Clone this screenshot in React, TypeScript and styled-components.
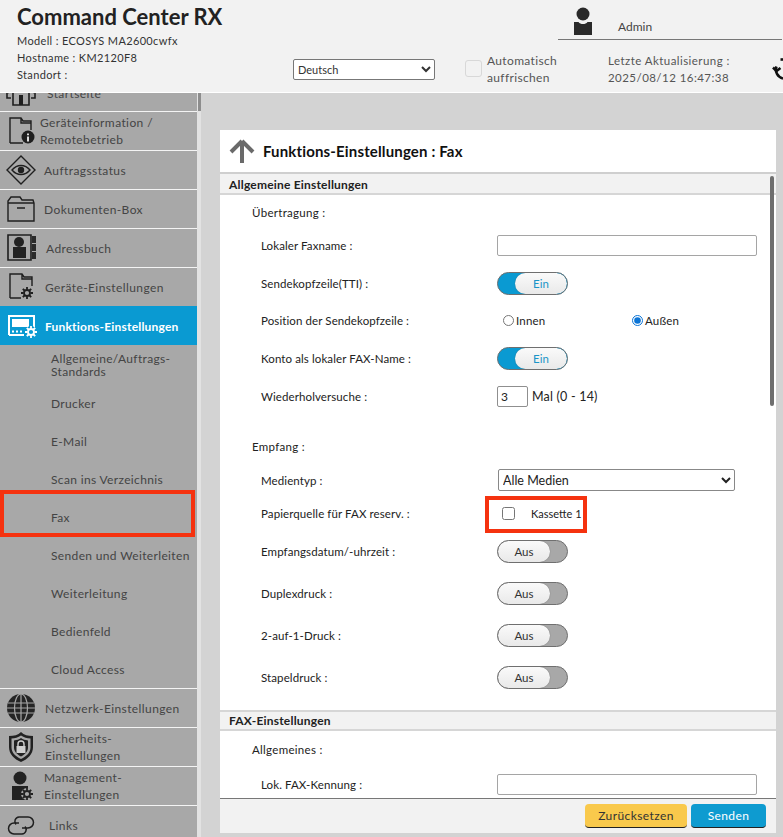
import React from 'react';
import styled, { createGlobalStyle } from 'styled-components';

const GlobalStyle = createGlobalStyle`
  html, body {
    margin: 0;
    padding: 0;
    height: 100%;
    overflow: hidden;
    background: #d3d3d3;
  }
  body, select, input, button {
    font-family: Lato, "Open Sans", sans-serif;
  }
`;

const Page = styled.div`
  width: 783px;
  height: 837px;
  display: flex;
  flex-direction: column;
  overflow: hidden;
`;

/* header */
const Header = styled.header`
  height: 93px;
  flex: none;
  display: grid;
  grid-template-columns: 293px 1fr;
  background: #f2f2f2;
  border-bottom: 1px solid #fff;
  box-sizing: border-box;
  overflow: hidden;
`;

const Brand = styled.div`
  padding: 3px 0 0 17px;
`;

const Title = styled.div`
  font-size: 22px;
  line-height: 28px;
  font-weight: 700;
  color: #222;
  white-space: nowrap;
  margin-bottom: 1px;
`;

const Info = styled.div`
  font-size: 11px;
  line-height: 17px;
  color: #333;
  white-space: nowrap;
  letter-spacing: 0.35px;
`;

const HeaderRight = styled.div`
  display: flex;
  flex-direction: column;
`;

const UserRow = styled.div`
  height: 40px;
  flex: none;
  margin-left: 265px;
  width: 224px;
  box-sizing: border-box;
  border-bottom: 1px solid #777;
  display: flex;
  align-items: flex-end;
  padding: 0 0 0 15px;
`;

const UserName = styled.span`
  font-size: 12px;
  color: #444;
  margin: 0 0 5px 25px;
`;

const Controls = styled.div`
  display: flex;
  height: 52px;
  padding-top: 12px;
  box-sizing: border-box;
  font-size: 12px;
  line-height: 17px;
  color: #555;
`;

const LangSelect = styled.select`
  width: 142px;
  height: 21px;
  font-size: 11px;
  color: #333;
  background: #fff;
  border: 1px solid #777;
  border-radius: 2px;
  margin-top: 7px;
  padding-left: 0;
`;

const AutoBox = styled.span`
  width: 17px;
  height: 17px;
  flex: none;
  margin: 8px 5px 0 30px;
  border: 1px solid #d8d8d8;
  border-radius: 3px;
  box-sizing: border-box;
`;

const AutoText = styled.div`
  width: 121px;
  flex: none;
  letter-spacing: 0.35px;
`;

const UpdateText = styled.div`
  width: 164px;
  flex: none;
  font-size: 11.5px;
  letter-spacing: 0.45px;
`;

/* body */
const Body = styled.div`
  flex: 1;
  min-height: 0;
  display: flex;
`;

const Sidebar = styled.nav`
  width: 197px;
  flex: none;
  background: #a8a8a8;
  overflow: hidden;
`;

const SideScroll = styled.div`
  width: 4px;
  flex: none;
  background: #e2e2e2;
`;

const SideThumb = styled.div`
  width: 3px;
  height: 18px;
  margin-left: 1px;
  background: #8d8d8d;
`;

const NavItem = styled.div<{ $active?: boolean; $cut?: boolean }>`
  height: 39px;
  box-sizing: border-box;
  border-top: 1px solid ${(p) => (p.$active ? '#0a9ad2' : '#f4f4f4')};
  display: flex;
  align-items: center;
  padding-left: 6px;
  padding-top: ${(p) => (p.$cut ? '3px' : '0')};
  margin-top: ${(p) => (p.$cut ? '-21px' : '0')};
  background: ${(p) => (p.$active ? '#0a9ad2' : 'transparent')};
  color: ${(p) => (p.$active ? '#fff' : '#444')};
`;

const NavIcon = styled.svg`
  width: 30px;
  height: 30px;
  flex: none;
  overflow: visible;
`;

const NavLabel = styled.span<{ $gap: number; $active?: boolean }>`
  margin-left: ${(p) => p.$gap}px;
  font-size: 12px;
  line-height: 17px;
  letter-spacing: ${(p) => (p.$active ? '0.2px' : '0.4px')};
  font-weight: ${(p) => (p.$active ? 700 : 400)};
`;

const SubItem = styled.div`
  height: 38px;
  box-sizing: border-box;
  position: relative;
  display: flex;
  align-items: center;
  padding: 0 0 0 51px;
  font-size: 12px;
  line-height: 13px;
  letter-spacing: 0.35px;
  color: #444;
`;

const SubGroup = styled.div`
  padding-top: 1px;
`;

const Mark = styled.div`
  position: absolute;
  border: 4px solid #f5320f;
  box-sizing: border-box;
  pointer-events: none;
`;

const FaxMark = styled(Mark)`
  left: 0;
  top: -8px;
  width: 195px;
  height: 47px;
`;

const PaperMark = styled(Mark)`
  left: -12px;
  top: -11px;
  width: 102px;
  height: 37px;
`;

const Main = styled.main`
  flex: 1;
  min-width: 0;
  padding: 37px 7px 4px 19px;
  display: flex;
`;

const Card = styled.div`
  flex: 1;
  min-width: 0;
  background: #fff;
  display: flex;
  flex-direction: column;
`;

const CardTitle = styled.div`
  height: 44px;
  flex: none;
  box-sizing: border-box;
  border-bottom: 2px solid #cfcfcf;
  display: flex;
  align-items: center;
  padding-left: 8px;
  font-size: 15px;
  font-weight: 700;
  color: #111;
  letter-spacing: 0.15px;
`;

const ArrowIcon = styled.svg`
  width: 28px;
  height: 26px;
  margin-right: 7px;
`;

const FormScroll = styled.div`
  flex: 1;
  min-height: 0;
  overflow: hidden;
  position: relative;
`;

const Thumb = styled.div`
  position: absolute;
  right: 2px;
  top: 2px;
  width: 4px;
  height: 230px;
  border-radius: 2px;
  background: #6e6e6e;
`;

const SectionBar = styled.div<{ $gapTop?: number }>`
  height: 21px;
  box-sizing: border-box;
  display: flex;
  align-items: center;
  background: #f2f2f2;
  border-bottom: 2px solid #d6d6d6;
  border-top: 2px solid ${(p) => (p.$gapTop ? '#d6d6d6' : '#f2f2f2')};
  margin-top: ${(p) => p.$gapTop ?? 0}px;
  padding-left: 9px;
  font-size: 12px;
  font-weight: 700;
  color: #222;
  letter-spacing: 0.2px;
`;

const GroupHead = styled.div<{ $gapTop?: number }>`
  height: 31px;
  box-sizing: border-box;
  padding: 10px 0 0 32px;
  margin-top: ${(p) => p.$gapTop ?? 0}px;
  font-size: 11.5px;
  line-height: 16px;
  color: #222;
  letter-spacing: 0.3px;
`;

const Row = styled.div<{ $h?: number; $after?: number }>`
  height: ${(p) => p.$h ?? 38}px;
  margin-bottom: ${(p) => p.$after ?? 0}px;
  display: flex;
  align-items: center;
  padding-left: 41px;
`;

const Label = styled.div`
  width: 236px;
  flex: none;
  font-size: 11.5px;
  color: #222;
  letter-spacing: 0.1px;
  white-space: nowrap;
`;

const Control = styled.div`
  position: relative;
  display: flex;
  align-items: center;
  font-size: 11.5px;
  color: #222;
`;

const TextInput = styled.input`
  width: 260px;
  height: 21px;
  box-sizing: border-box;
  border: 1px solid #a5a5a5;
  border-radius: 2px;
  outline: none;
  background: #fff;
`;

const NumberInput = styled.input`
  width: 31px;
  height: 21px;
  box-sizing: border-box;
  border: 1px solid #8f8f8f;
  border-radius: 2px;
  padding: 0 0 0 3px;
  font-size: 12px;
  color: #222;
  margin-right: 4px;
`;

const Unit = styled.span`
  font-size: 12.5px;
  letter-spacing: 0.2px;
`;

const MediaSelect = styled.select`
  width: 237px;
  height: 22px;
  margin-left: 1px;
  font-size: 12.5px;
  color: #222;
  background: #fff;
  border: 1px solid #888;
  border-radius: 2px;
`;

const Toggle = styled.div<{ $on: boolean }>`
  width: 71px;
  height: 23px;
  box-sizing: border-box;
  border: 1px solid #6f6f6f;
  border-radius: 12px;
  overflow: hidden;
  display: flex;
  flex-direction: ${(p) => (p.$on ? 'row' : 'row-reverse')};
  background: ${(p) => (p.$on ? '#0a9ad2' : '#a8a8a8')};
`;

const Knob = styled.div<{ $on: boolean }>`
  margin-${(p) => (p.$on ? 'left' : 'right')}: 17px;
  flex: 1;
  border-radius: 11px;
  background: linear-gradient(#fafafa, #e9e9e9);
  box-shadow: 0 0 1px #555;
  text-align: center;
  font-size: 11.5px;
  line-height: 22px;
  color: ${(p) => (p.$on ? '#1a95c8' : '#333')};
`;

const RadioLabel = styled.label`
  width: 129px;
  display: flex;
  align-items: center;
  padding-left: 6px;
  box-sizing: border-box;
  letter-spacing: 0.2px;
  &:last-child {
    width: 120px;
  }
`;

const Radio = styled.input`
  width: 11px;
  height: 11px;
  margin: 0 2px 0 0;
  accent-color: #0b74d6;
`;

const CheckBox = styled.input`
  width: 13px;
  height: 13px;
  margin: 0 16px 0 5px;
`;

const CheckText = styled.span`
  font-size: 11px;
`;

const Footer = styled.div`
  height: 35px;
  flex: none;
  box-sizing: border-box;
  background: #f2f2f2;
  border-top: 1px solid #777;
  display: flex;
  justify-content: flex-end;
  align-items: flex-start;
  gap: 4px;
  padding: 5px 10px 0 0;
`;

const Action = styled.button<{ $primary?: boolean }>`
  height: 24px;
  width: ${(p) => (p.$primary ? 75 : 102)}px;
  border: 0;
  border-bottom: 1px solid #222;
  border-radius: 4px;
  background: ${(p) => (p.$primary ? '#0e9bd0' : '#f9c94c')};
  color: ${(p) => (p.$primary ? '#fff' : '#333')};
  font-size: 12px;
  letter-spacing: 0.4px;
  padding: 0;
`;

const UserIcon = () => (
  <svg width="20" height="28" viewBox="0 0 20 28" style={{ marginBottom: 4 }}>
    <circle cx="10" cy="7" r="6.5" fill="#2a2a2a" />
    <path d="M1 15h4.5c1 1.500 2.600 2 4.500 2s3.500-.5 4.500-2H19v13H1z" fill="#2a2a2a" />
  </svg>
);

const RefreshIcon = () => (
  <svg
    width="24"
    height="24"
    viewBox="0 0 24 24"
    fill="none"
    stroke="#111"
    strokeWidth="2.6"
    style={{ marginTop: 5, flex: 'none' }}
  >
    <path d="M11 21.5A9 9 0 0 1 4.500 9.500" />
    <path d="M1 10.500l3.500 3.500 4-3" />
    <path d="M8.500 2.500h3" />
  </svg>
);

const S = { fill: 'none', stroke: '#1f1f1f', strokeWidth: 1.4 };

const HomeGlyph = () => (
  <NavIcon viewBox="0 0 30 30">
    <g {...S} strokeWidth={1.6}>
      <path d="M2 14L15 2l13 12" />
      <path d="M1 13v6h4M29 13v6h-4" />
      <path d="M7 14v12h16V14" />
    </g>
    <path d="M13 16h4v10h-4z" fill="#1f1f1f" />
  </NavIcon>
);

const InfoGlyph = () => (
  <NavIcon viewBox="0 0 30 30">
    <path {...S} d="M4 27V2h11l2 3h8v9M4 27h13M15 2v5h10" />
    <circle cx="22" cy="21" r="6.5" fill="#1f1f1f" />
    <path d="M21 17.500h2v1.800h-2zM21 20.500h2v5h-2z" fill="#ddd" />
  </NavIcon>
);

const EyeGlyph = () => (
  <NavIcon viewBox="0 0 30 30">
    <path {...S} d="M15 1l14 14-14 14L1 15z" />
    <path {...S} d="M6 15c5-6 13-6 18 0-5 6-13 6-18 0z" />
    <circle cx="15" cy="15" r="3.2" fill="#1f1f1f" />
  </NavIcon>
);

const BoxGlyph = () => (
  <NavIcon viewBox="0 0 30 30">
    <path {...S} d="M2 27V7l3-4h9l2 3h11l1 3v18zM2 9h26M11 14h8" />
  </NavIcon>
);

const BookGlyph = () => (
  <NavIcon viewBox="0 0 30 30">
    <path {...S} strokeWidth={1.6} d="M2 2h23v25H2z" />
    <path d="M26 3h4v7h-4zM26 11h4v7h-4zM26 19h4v7h-4z" fill="#2a2a2a" />
    <circle cx="13" cy="9" r="5" fill="#222" />
    <path d="M7 14h13v11H7z" fill="#222" />
  </NavIcon>
);

const GearMark = ({ x, y, color, back }: { x: number; y: number; color: string; back: string }) => (
  <g transform={`translate(${x} ${y})`} fill="none" stroke={color}>
    <circle r="6" fill={back} stroke="none" />
    <circle r="3" strokeWidth="1.8" />
    <path strokeWidth="1.8" d="M0-6v2.500M0 3.500V6M-6 0h2.500M3.500 0H6M-4.200-4.200l1.700 1.700M2.500 2.500l1.700 1.700M4.200-4.200L2.500-2.500M-2.500 2.500l-1.700 1.700" />
  </g>
);

const DeviceGlyph = () => (
  <NavIcon viewBox="0 0 30 30">
    <path {...S} d="M4 26V2h12l2 3h8v9M4 26h11M16 2v5h10" />
    <GearMark x={21} y={21} color="#1f1f1f" back="#a8a8a8" />
  </NavIcon>
);

const FunctionGlyph = () => (
  <NavIcon viewBox="0 0 30 30">
    <path fill="none" stroke="#fff" strokeWidth="2" d="M3 24V5h25v12M3 24h15" />
    <path d="M6 8h17v8H6z" fill="#fff" />
    <path d="M6 19.500h2v2H6zM10 19.500h2v2h-2zM14 19.500h2v2h-2z" fill="#fff" />
    <GearMark x={25} y={21} color="#fff" back="#0a9ad2" />
  </NavIcon>
);

const GlobeGlyph = () => (
  <NavIcon viewBox="0 0 30 30">
    <circle cx="15" cy="15" r="14" fill="#252525" />
    <g fill="none" stroke="#a8a8a8" strokeWidth="1.2">
      <ellipse cx="15" cy="15" rx="6.5" ry="14" />
      <path d="M15 1v28M2 10h26M1 15h28M2 20h26" />
    </g>
  </NavIcon>
);

const ShieldGlyph = () => (
  <NavIcon viewBox="0 0 30 30">
    <path d="M15 0c3 3 7 4 12 4v11c0 7-5 12-12 15C8 27 3 22 3 15V4c5 0 9-1 12-4z" fill="#222" />
    <path
      d="M15 3.500c3 2 6 3 9.500 3v9c0 5-4 9-9.500 11.500-5.500-2.500-9.500-6.500-9.500-11.500v-9c3.500 0 6.500-1 9.500-3z"
      fill="#a8a8a8"
    />
    <path d="M15 6c2 1.500 4 2 7 2.500v7c0 4-3 7-7 9-4-2-7-5-7-9v-7c3-.5 5-1 7-2.500z" fill="#222" />
    <path d="M10.500 14h9v7h-9z" fill="#cfcfcf" />
    <path d="M12 14v-2a3 3 0 0 1 6 0v2" fill="none" stroke="#cfcfcf" strokeWidth="1.4" />
  </NavIcon>
);

const ManagerGlyph = () => (
  <NavIcon viewBox="0 0 30 30">
    <circle cx="14" cy="7" r="6.5" fill="#222" />
    <path d="M6 15h16v14H6z" fill="#222" />
    <GearMark x={21} y={23} color="#222" back="#a8a8a8" />
  </NavIcon>
);

const LinkGlyph = () => (
  <NavIcon viewBox="0 0 30 30">
    <path
      fill="none"
      stroke="#1f1f1f"
      strokeWidth="1.5"
      d="M13 13H8a5.500 5.500 0 0 0 0 11h8a4.500 4.500 0 0 0 3-7.500"
    />
    <path
      fill="none"
      stroke="#1f1f1f"
      strokeWidth="1.5"
      d="M16 18h6a5.500 5.500 0 0 0 0-11H13a4.500 4.500 0 0 0-3 7.500"
    />
  </NavIcon>
);

const SwitchField = ({ on }: { on: boolean }) => (
  <Toggle $on={on}>
    <Knob $on={on}>{on ? 'Ein' : 'Aus'}</Knob>
  </Toggle>
);

const subItems = ['Drucker', 'E-Mail', 'Scan ins Verzeichnis'];
const afterFax = ['Senden und Weiterleiten', 'Weiterleitung', 'Bedienfeld', 'Cloud Access'];

const Navigation = () => (
  <Sidebar>
    <NavItem $cut>
      <HomeGlyph />
      <NavLabel $gap={11}>Startseite</NavLabel>
    </NavItem>
    <NavItem>
      <InfoGlyph />
      <NavLabel $gap={4}>
        Geräteinformation /<br />
        Remotebetrieb
      </NavLabel>
    </NavItem>
    <NavItem>
      <EyeGlyph />
      <NavLabel $gap={8}>Auftragsstatus</NavLabel>
    </NavItem>
    <NavItem>
      <BoxGlyph />
      <NavLabel $gap={8}>Dokumenten-Box</NavLabel>
    </NavItem>
    <NavItem>
      <BookGlyph />
      <NavLabel $gap={10}>Adressbuch</NavLabel>
    </NavItem>
    <NavItem>
      <DeviceGlyph />
      <NavLabel $gap={9}>Geräte-Einstellungen</NavLabel>
    </NavItem>
    <NavItem $active>
      <FunctionGlyph />
      <NavLabel $gap={9} $active>
        Funktions-Einstellungen
      </NavLabel>
    </NavItem>
    <SubGroup>
      <SubItem>
        <span>
          Allgemeine/Auftrags-
          <br />
          Standards
        </span>
      </SubItem>
      {subItems.map((item) => (
        <SubItem key={item}>{item}</SubItem>
      ))}
      <SubItem>
        Fax
        <FaxMark />
      </SubItem>
      {afterFax.map((item) => (
        <SubItem key={item}>{item}</SubItem>
      ))}
    </SubGroup>
    <NavItem>
      <GlobeGlyph />
      <NavLabel $gap={9}>Netzwerk-Einstellungen</NavLabel>
    </NavItem>
    <NavItem>
      <ShieldGlyph />
      <NavLabel $gap={9}>
        Sicherheits-
        <br />
        Einstellungen
      </NavLabel>
    </NavItem>
    <NavItem>
      <ManagerGlyph />
      <NavLabel $gap={8}>
        Management-
        <br />
        Einstellungen
      </NavLabel>
    </NavItem>
    <NavItem>
      <LinkGlyph />
      <NavLabel $gap={13}>Links</NavLabel>
    </NavItem>
  </Sidebar>
);

const FaxForm = () => (
  <Card>
    <CardTitle>
      <ArrowIcon viewBox="0 0 28 26">
        <path d="M14 3L3 14M14 3l11 11M14 3v22" fill="none" stroke="#6a6a6a" strokeWidth="4" />
      </ArrowIcon>
      Funktions-Einstellungen : Fax
    </CardTitle>
    <FormScroll>
      <Thumb />
      <SectionBar>Allgemeine Einstellungen</SectionBar>
      <GroupHead>Übertragung :</GroupHead>
      <Row>
        <Label>Lokaler Faxname :</Label>
        <TextInput />
      </Row>
      <Row>
        <Label>Sendekopfzeile(TTI) :</Label>
        <SwitchField on />
      </Row>
      <Row $h={37}>
        <Label>Position der Sendekopfzeile :</Label>
        <Control>
          <RadioLabel>
            <Radio type="radio" name="pos" />
            Innen
          </RadioLabel>
          <RadioLabel>
            <Radio type="radio" name="pos" defaultChecked />
            Außen
          </RadioLabel>
        </Control>
      </Row>
      <Row>
        <Label>Konto als lokaler FAX-Name :</Label>
        <SwitchField on />
      </Row>
      <Row>
        <Label>Wiederholversuche :</Label>
        <Control>
          <NumberInput defaultValue="3" />
          <Unit>Mal (0 - 14)</Unit>
        </Control>
      </Row>
      <GroupHead $gapTop={14}>Empfang :</GroupHead>
      <Row $h={40}>
        <Label>Medientyp :</Label>
        <MediaSelect defaultValue="all">
          <option value="all">Alle Medien</option>
        </MediaSelect>
      </Row>
      <Row $h={26} $after={4}>
        <Label>Papierquelle für FAX reserv. :</Label>
        <Control>
          <CheckBox type="checkbox" />
          <CheckText>Kassette 1</CheckText>
          <PaperMark />
        </Control>
      </Row>
      <Row $h={42}>
        <Label>Empfangsdatum/-uhrzeit :</Label>
        <SwitchField on={false} />
      </Row>
      <Row $h={42}>
        <Label>Duplexdruck :</Label>
        <SwitchField on={false} />
      </Row>
      <Row $h={42}>
        <Label>2-auf-1-Druck :</Label>
        <SwitchField on={false} />
      </Row>
      <Row $h={42}>
        <Label>Stapeldruck :</Label>
        <SwitchField on={false} />
      </Row>
      <SectionBar $gapTop={12}>FAX-Einstellungen</SectionBar>
      <GroupHead $gapTop={1}>Allgemeines :</GroupHead>
      <Row $h={42}>
        <Label>Lok. FAX-Kennung :</Label>
        <TextInput />
      </Row>
    </FormScroll>
    <Footer>
      <Action>Zurücksetzen</Action>
      <Action $primary>Senden</Action>
    </Footer>
  </Card>
);

export default function App() {
  return (
    <Page>
      <GlobalStyle />
      <Header>
        <Brand>
          <Title>Command Center RX</Title>
          <Info>Modell : ECOSYS MA2600cwfx</Info>
          <Info>Hostname : KM2120F8</Info>
          <Info>Standort :</Info>
        </Brand>
        <HeaderRight>
          <UserRow>
            <UserIcon />
            <UserName>Admin</UserName>
          </UserRow>
          <Controls>
            <LangSelect defaultValue="de">
              <option value="de">Deutsch</option>
            </LangSelect>
            <AutoBox />
            <AutoText>
              Automatisch
              <br />
              auffrischen
            </AutoText>
            <UpdateText>
              Letzte Aktualisierung :
              <br />
              2025/08/12 16:47:38
            </UpdateText>
            <RefreshIcon />
          </Controls>
        </HeaderRight>
      </Header>
      <Body>
        <Navigation />
        <SideScroll>
          <SideThumb />
        </SideScroll>
        <Main>
          <FaxForm />
        </Main>
      </Body>
    </Page>
  );
}
